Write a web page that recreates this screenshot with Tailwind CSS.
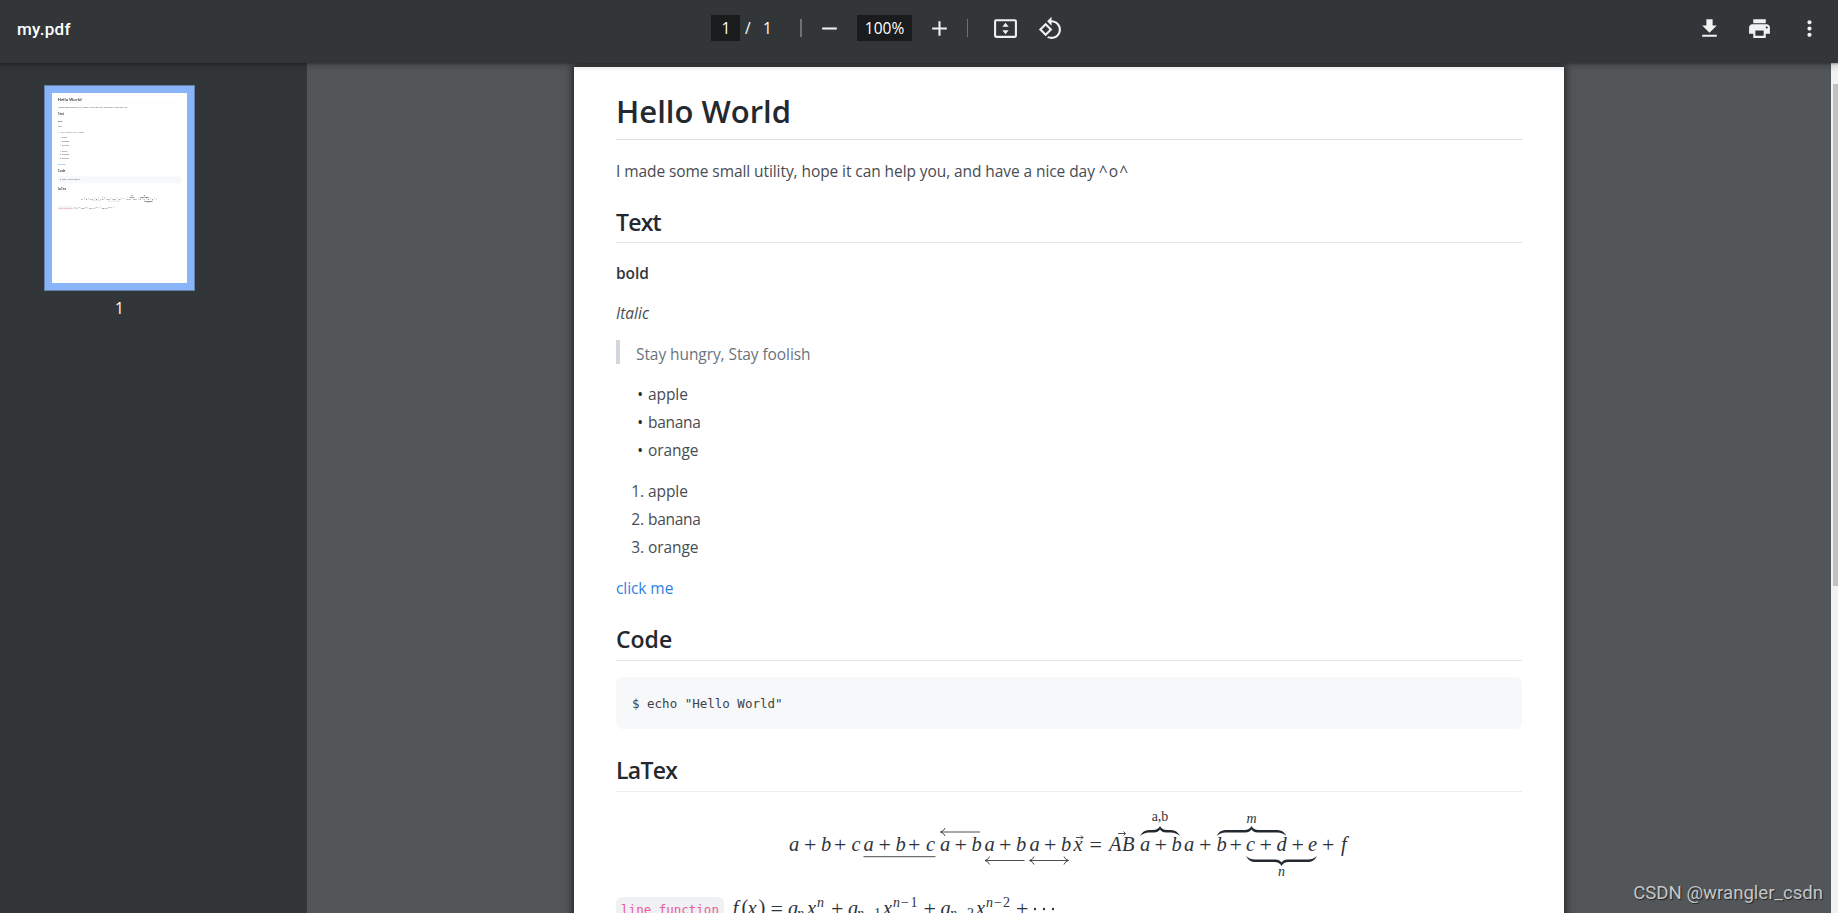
<!DOCTYPE html>
<html lang="en">
<head>
  <meta charset="UTF-8">
  <meta name="viewport" content="width=device-width, initial-scale=1.0">
  <title>my.pdf</title>
  <script src="https://cdn.jsdelivr.net/npm/@tailwindcss/browser@4"></script>
</head>
<body class="h-screen overflow-hidden flex flex-col bg-[#525659] font-['Open_Sans',sans-serif]">

  <!-- Toolbar -->
  <header class="relative z-10 h-[63px] shrink-0 bg-[#323639] text-white flex items-start shadow-[0_1px_2px_rgba(0,0,0,0.3),0_2px_6px_2px_rgba(0,0,0,0.15)]">
    <div class="w-[711px] pl-[17px] pt-[17px] text-[17px] leading-6 tracking-[0.3px] font-medium font-[Roboto,sans-serif]">my.pdf</div>
    <div class="flex items-center pt-[15px] h-[41px] text-[15.5px] leading-[26px]">
      <span class="w-[29px] h-[26px] bg-[#191b1c] text-center pl-px">1</span>
      <span class="ml-[5px] w-[18px]">/</span>
      <span class="w-[37px]">1</span>
      <span class="w-[2px] h-[18px] bg-[#6f7274]"></span>
      <svg class="ml-[15px] size-[25px]" viewBox="0 0 24 24" fill="#f1f1f1"><path d="M5 11h14v2H5z"/></svg>
      <span class="ml-[15px] w-[55px] h-[26px] bg-[#191b1c] text-center">100%</span>
      <svg class="ml-[15px] size-[25px]" viewBox="0 0 24 24" fill="#f1f1f1"><path d="M19 13h-6v6h-2v-6H5v-2h6V5h2v6h6v2z"/></svg>
      <span class="ml-[15px] w-px h-[18px] bg-[#6f7274]"></span>
      <svg class="ml-[25px] size-[25px]" viewBox="0 0 24 24" fill="#f1f1f1"><path fill-rule="evenodd" d="M3 3h18a2 2 0 0 1 2 2v14a2 2 0 0 1-2 2H3a2 2 0 0 1-2-2V5a2 2 0 0 1 2-2zm0 2v14h18V5H3zm9 1.500L15 10.300H9zM12 17.500L9 13.700h6z"/></svg>
      <svg class="ml-5 size-[25px]" viewBox="0 0 24 24" fill="#f1f1f1"><path d="M7.340 6.410L.860 12.900l6.490 6.480 6.490-6.480-6.500-6.490zM3.690 12.900l3.660-3.660L11 12.900l-3.660 3.660-3.650-3.660zm15.670-6.260C17.610 4.880 15.300 4 13 4V.760L8.760 5 13 9.240V6c1.790 0 3.580.680 4.950 2.050 2.730 2.730 2.730 7.170 0 9.900C16.580 19.320 14.790 20 13 20c-.970 0-1.940-.210-2.840-.610l-1.490 1.490C10.020 21.620 11.510 22 13 22c2.300 0 4.610-.880 6.360-2.640 3.520-3.510 3.520-9.210 0-12.720z"/></svg>
    </div>
    <div class="ml-auto pr-4 pt-4 flex gap-[25px]">
      <svg class="size-[25px]" viewBox="0 0 24 24" fill="#f1f1f1"><path d="M19 9h-4V3H9v6H5l7 7 7-7zM5 18v2h14v-2H5z"/></svg>
      <svg class="size-[25px]" viewBox="0 0 24 24" fill="#f1f1f1"><path d="M19 8H5c-1.660 0-3 1.340-3 3v6h4v4h12v-4h4v-6c0-1.660-1.340-3-3-3zm-3 11H8v-5h8v5zm3-7c-.550 0-1-.450-1-1s.450-1 1-1 1 .450 1 1-.450 1-1 1zm-1-9H6v4h12V3z"/></svg>
      <svg class="size-[25px]" viewBox="0 0 24 24" fill="#f1f1f1"><path d="M12 8c1.100 0 2-.900 2-2s-.900-2-2-2-2 .900-2 2 .900 2 2 2zm0 2c-1.100 0-2 .900-2 2s.900 2 2 2 2-.900 2-2-.900-2-2-2zm0 6c-1.100 0-2 .900-2 2s.900 2 2 2 2-.900 2-2-.900-2-2-2z"/></svg>
    </div>
  </header>

  <div class="flex flex-1 min-h-0">
    <!-- Thumbnails -->
    <aside class="w-[307px] shrink-0 bg-[#323639] pt-[22px] pl-11">
      <div class="w-[151px] text-center text-white">
        <div class="w-[151px] h-[206px] bg-[#8ab4f8] border border-[#6581ae] p-[7px]">
          <div id="thumb" class="w-[135px] h-[190px] bg-white overflow-hidden text-left"></div>
        </div>
        <div class="mt-[5px] text-[15.5px] leading-6">1</div>
      </div>
    </aside>

    <!-- Document -->
    <main class="flex-1 min-w-0 overflow-hidden pt-1 pl-[267px]">
      <div id="page" class="w-[990px] h-[1400px] bg-white px-[42px] pt-6 text-[15.5px] leading-7 tracking-[-0.08px] text-[#484c52] shadow-[0_0_7px_2px_rgba(0,0,0,0.55)]">
        <h1 class="h-[49px] border-b border-[#dcdfe2] text-[31px] leading-10 tracking-normal font-semibold text-[#24292f]">Hello World</h1>
        <p class="mt-[17px]">I made some small utility, hope it can help you, and have a nice day <span class="tracking-[1.1px]">^o^</span></p>

        <h2 class="mt-[21px] h-[37px] border-b border-[#dfe5ea] pt-px text-[23px] leading-[30px] tracking-[-0.8px] font-semibold text-[#24292f]">Text</h2>
        <p class="mt-4 font-semibold text-[#33373d]">bold</p>
        <p class="mt-3 italic tracking-normal">Italic</p>
        <blockquote class="mt-[13px] h-6 border-l-4 border-[#d0d7de] pl-4 text-[#6a737d]">Stay hungry, Stay foolish</blockquote>
        <ul class="mt-4">
          <li class="flex"><span class="w-[27px] mr-[5px] text-right text-[#24292f]">•</span>apple</li>
          <li class="flex"><span class="w-[27px] mr-[5px] text-right text-[#24292f]">•</span><span class="tracking-[-0.3px]">banana</span></li>
          <li class="flex"><span class="w-[27px] mr-[5px] text-right text-[#24292f]">•</span>orange</li>
        </ul>
        <ol class="mt-[13px]">
          <li class="flex"><span class="w-[28px] mr-1 text-right">1.</span>apple</li>
          <li class="flex"><span class="w-[28px] mr-1 text-right">2.</span><span class="tracking-[-0.3px]">banana</span></li>
          <li class="flex"><span class="w-[28px] mr-1 text-right">3.</span>orange</li>
        </ol>
        <p class="mt-[13px] text-[#2f83e4]">click me</p>

        <h2 class="mt-[21px] h-[38px] border-b border-[#dfe5ea] pt-px text-[23px] leading-[30px] tracking-normal font-semibold text-[#24292f]">Code</h2>
        <pre class="mt-4 h-[52px] rounded-md bg-[#f6f8fa] px-4 pt-[13px] text-[12.5px] leading-7 tracking-normal text-[#3f4348] font-['DejaVu_Sans_Mono',monospace]">$ echo "Hello World"</pre>

        <h2 class="mt-[25px] h-[38px] border-b border-[#e6eeee] pt-px text-[23px] leading-[30px] tracking-[-0.7px] font-semibold text-[#24292f]">LaTex</h2>

        <!-- Display formula -->
        <svg class="block w-[906px] h-[98px] tracking-normal font-['Liberation_Serif',serif]" viewBox="616 792 906 98" fill="#30343a" stroke="none">
          <g font-size="20.500" font-style="italic">
            <text y="851" x="789 821 851.500 863.500 895.500 926 940 971.500 984.500 1016 1029.500 1061">abcabcababab</text>
            <text y="851" x="1073.500 1109 1122 1140 1171.500 1184 1216.500 1246 1276.500 1308 1341">xABababcdef</text>
          </g>
          <g font-size="22">
            <text y="851.500" x="804 834 878.500 908 954.500 999 1044 1089.500 1154.500 1199 1229.500 1259.500 1291.500 1322">+++++++=++++++</text>
          </g>
          <g text-anchor="middle" font-size="14">
            <text x="1160" y="821">a,b</text>
            <text x="1251.500" y="822.500" font-style="italic">m</text>
            <text x="1281.500" y="875.500" font-style="italic">n</text>
          </g>
          <g fill="none" stroke="#4a4e54" stroke-width="1">
            <path d="M863.500 856.700H935.500"/>
            <path d="M980 832H940.500M945 828q-1 3-4.500 4q3.500 1 4.500 4"/>
            <path d="M1024.500 860.500H985M989.500 856.500q-1 3-4.500 4q3.500 1 4.500 4"/>
            <path d="M1068.500 860.500H1029.500M1034 856.500q-1 3-4.500 4q3.500 1 4.500 4M1064 856.500q1 3 4.500 4q-3.500 1-4.500 4"/>
            <path d="M1076 837.500H1083M1081 835.500l2 2l-2 2"/>
            <path d="M1118 833.500H1125.500M1123.500 831.500l2 2l-2 2"/>
          </g>
          <g fill="#24292f">
            <path d="M1140 836q3-6 9-6h4q5 0 7-4q2 4 7 4h4q6 0 9 6q-4-3.500-9-3.500h-5q-4 0-6-3q-2 3-6 3h-5q-5 0-9 3.500z"/>
            <path d="M1216.500 836q3-6 9-6h19q5 0 7-4q2 4 7 4h19q6 0 9 6q-4-3.500-9-3.500h-20q-4 0-6-3q-2 3-6 3h-20q-5 0-9 3.500z"/>
            <path d="M1246 856q3 6 9 6h19.500q5 0 7 4q2-4 7-4h19.500q6 0 9-6q-4 3.500-9 3.500h-20.500q-4 0-6 3q-2-3-6-3h-20.500q-5 0-9-3.500z"/>
          </g>
        </svg>

        <!-- Inline formula -->
        <div class="pt-[7px] flex tracking-normal">
          <code class="w-[108px] h-[24px] rounded-md bg-[#eff1f2] text-center text-[12.5px] leading-[25px] text-[#ec5ba1] font-['DejaVu_Sans_Mono',monospace]">line function</code>
          <svg class="w-[350px] h-[30px] font-['Liberation_Serif',serif]" viewBox="724 897 350 30" fill="#30343a">
            <text y="914.500" font-size="20.500" font-style="italic" x="732.500 747.500 788 807 848 883 940.500 976">fxaxaxax</text>
            <text y="914" font-size="20.500" x="741.500 758.500">()</text>
            <text y="915.500" font-size="22" x="770.500 831 923.500 1016">=+++</text>
            <text y="907" font-size="14" font-style="italic" x="817 893 986">nnn</text>
            <text y="907" font-size="14" x="901 910.500 994 1003">−1−2</text>
            <text y="917.500" font-size="14" font-style="italic" x="797 857 950">nnn</text>
            <text y="917.500" font-size="14" x="865 874 958 967">−1−2</text>
            <g><circle cx="1035" cy="909" r="1.200"/><circle cx="1044" cy="909" r="1.200"/><circle cx="1053" cy="909" r="1.200"/></g>
          </svg>
        </div>
      </div>
    </main>

    <!-- Scrollbar -->
    <div class="w-[7px] shrink-0 bg-[#f1f1f1] pl-[2px] pt-[21px]">
      <div class="h-[502px] bg-[#c1c1c1]"></div>
    </div>
  </div>

  <!-- Watermark -->
  <div class="absolute right-[15px] bottom-[6px] text-[18.6px] leading-7 text-[#c4c6c7] font-[Roboto,sans-serif] [text-shadow:1px_1px_1px_rgba(0,0,0,0.6)]">CSDN @wrangler_csdn</div>

  <script>
    // The thumbnail is a scaled copy of the page
    const copy = document.getElementById("page").cloneNode(true);
    copy.removeAttribute("id");
    copy.style.transformOrigin = "0 0";
    copy.style.transform = "scale(" + 135 / 990 + ")";
    document.getElementById("thumb").appendChild(copy);
  </script>
</body>
</html>
